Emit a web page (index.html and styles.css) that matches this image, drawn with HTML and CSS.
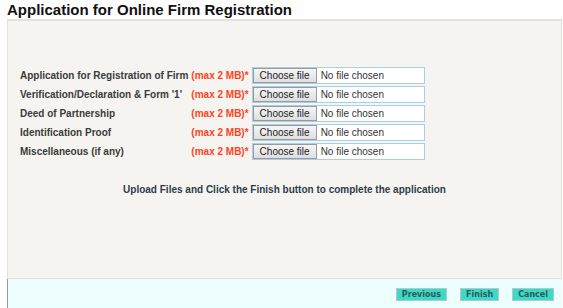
FILE: index.html
```html
<!DOCTYPE html>
<html lang="en">
<head>
    <meta charset="UTF-8">
    <title>Online Firm Registration</title>
    <link rel="stylesheet" href="styles.css">
</head>
<body>
    <h2 class="page-title">Application for Online Firm Registration</h2>

    <div class="panel">
        <table class="uploads">
            <tr>
                <td class="doc">Application for Registration of Firm</td>
                <td class="limit">(max 2 MB)*</td>
                <td>
                    <label class="file-box">
                        <input type="file" name="app_form">
                        <span class="file-btn">Choose file</span>
                        <span class="file-name">No file chosen</span>
                    </label>
                </td>
            </tr>
            <tr>
                <td class="doc">Verification/Declaration &amp; Form '1'</td>
                <td class="limit">(max 2 MB)*</td>
                <td>
                    <label class="file-box">
                        <input type="file" name="form_one">
                        <span class="file-btn">Choose file</span>
                        <span class="file-name">No file chosen</span>
                    </label>
                </td>
            </tr>
            <tr>
                <td class="doc">Deed of Partnership</td>
                <td class="limit">(max 2 MB)*</td>
                <td>
                    <label class="file-box">
                        <input type="file" name="deed">
                        <span class="file-btn">Choose file</span>
                        <span class="file-name">No file chosen</span>
                    </label>
                </td>
            </tr>
            <tr>
                <td class="doc">Identification Proof</td>
                <td class="limit">(max 2 MB)*</td>
                <td>
                    <label class="file-box">
                        <input type="file" name="id_proof">
                        <span class="file-btn">Choose file</span>
                        <span class="file-name">No file chosen</span>
                    </label>
                </td>
            </tr>
            <tr>
                <td class="doc">Miscellaneous (if any)</td>
                <td class="limit">(max 2 MB)*</td>
                <td>
                    <label class="file-box">
                        <input type="file" name="misc">
                        <span class="file-btn">Choose file</span>
                        <span class="file-name">No file chosen</span>
                    </label>
                </td>
            </tr>
        </table>

        <p class="hint">Upload Files and Click the Finish button to complete the application</p>
    </div>

    <div class="footer">
        <button class="nav-btn">Previous</button>
        <button class="nav-btn">Finish</button>
        <button class="nav-btn">Cancel</button>
    </div>
</body>
</html>
```

FILE: styles.css
```css
body {
    margin: 0;
    padding: 0 1px 0 7px;
    font-family: 'Liberation Sans', Arial, sans-serif;
    background-color: #fff;
    color: #333;
}

.page-title {
    margin: 0;
    padding-top: 2px;
    height: 17px;
    font-size: 15px;
    line-height: 15px;
    font-weight: bold;
    color: #111;
}

.panel {
    background-color: #f5f4f0;
    border: 1px solid #e6e1d8;
    border-top-width: 2px;
    height: 260px;
    padding: 0 12px;
    box-sizing: border-box;
}

.uploads {
    border-collapse: collapse;
    margin-top: 45px;
}

.uploads td {
    padding: 0;
    height: 19px;
    font-size: 10px;
    font-weight: bold;
}

.doc {
    color: #3b3b3b;
    padding-right: 3px !important;
}

.limit {
    color: #ff4422;
    padding-right: 3px !important;
}

.file-box {
    display: flex;
    align-items: center;
    width: 173px;
    height: 17px;
    box-sizing: border-box;
    border: 1px solid #a8cfe9;
    background: #fff;
    font-weight: normal;
    cursor: pointer;
}

.file-box input[type="file"] {
    display: none;
}

.file-btn {
    height: 15px;
    box-sizing: border-box;
    padding: 0 6px;
    border: 1px solid #9a9a9a;
    background: linear-gradient(#f6f6f6, #dedede);
    font-size: 10px;
    line-height: 13px;
    color: #222;
}

.file-name {
    padding-left: 4px;
    font-size: 10px;
    color: #333;
}

.hint {
    margin: 23px 0 0;
    text-align: center;
    font-size: 10px;
    font-weight: bold;
    color: #2e3d4c;
}

.footer {
    background-color: #edfefe;
    border-left: 1px solid #999;
    height: 30px;
    display: flex;
    justify-content: flex-end;
    align-items: center;
    gap: 13px;
    padding: 0 8px 0 0;
}

.nav-btn {
    background-color: #3ed8c6;
    border: 1px solid #b5c9c6;
    color: #2a5c5c;
    font-family: 'DejaVu Sans', sans-serif;
    font-size: 8px;
    font-weight: bold;
    height: 13px;
    padding: 0 5px;
    line-height: 11px;
    cursor: pointer;
}
```
